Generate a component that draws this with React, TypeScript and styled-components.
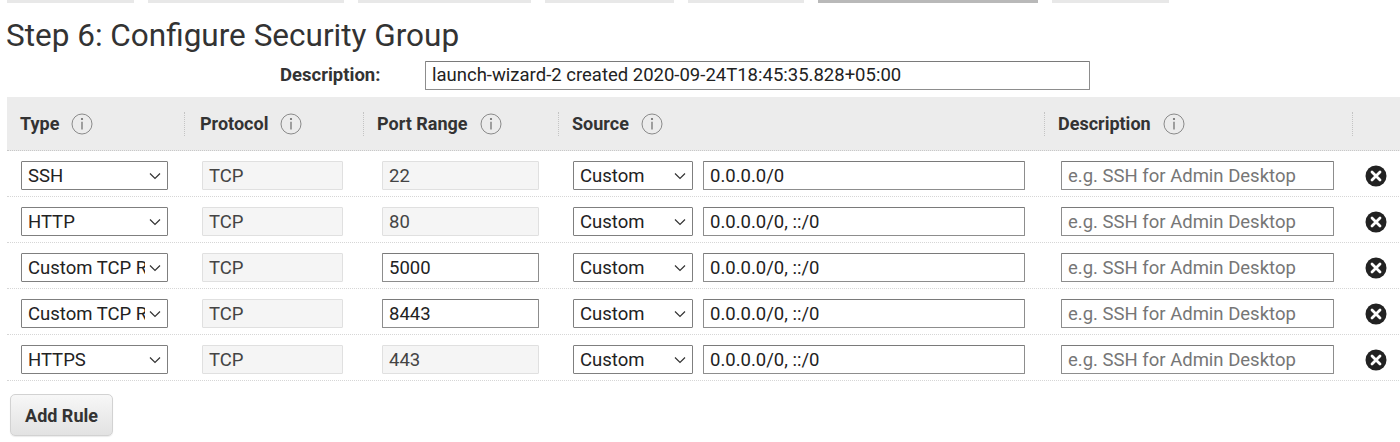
import React from "react";
import styled, { createGlobalStyle } from "styled-components";

const GlobalStyle = createGlobalStyle`
  html, body { margin: 0; padding: 0; background: #ffffff; }
  body { font-family: Roboto, "Liberation Sans", sans-serif; color: #222; overflow: hidden; width: 1400px; height: 442px; }
  * { box-sizing: border-box; }
`;

const Page = styled.div`
  width: 1400px;
  height: 442px;
  overflow: hidden;
`;

const TabStrip = styled.div`
  display: flex;
  gap: 14px;
  padding-left: 7px;
  height: 3px;
`;

const Tab = styled.div<{ $w: number; $active?: boolean }>`
  width: ${(p) => p.$w}px;
  height: 3px;
  background: ${(p) => (p.$active ? "#b9b9b9" : "#e8e8e8")};
`;

const Title = styled.h1`
  margin: 15px 0 0 0;
  padding-left: 6px;
  font-family: Roboto, "Liberation Sans", sans-serif;
  font-weight: 400;
  font-size: 31.5px;
  line-height: 36px;
  color: #333;
  letter-spacing: 0;
`;

const DescRow = styled.div`
  display: flex;
  align-items: center;
  margin-top: 7px;
  padding-left: 280px;
  height: 28px;
`;

const DescLabel = styled.label`
  font-weight: 700;
  font-size: 18.5px;
  color: #333;
  width: 145px;
`;

const TextBox = styled.div<{ $w: number; $disabled?: boolean; $placeholder?: boolean }>`
  width: ${(p) => p.$w}px;
  height: 29px;
  display: flex;
  align-items: center;
  padding-left: 6px;
  font-size: 18.5px;
  white-space: nowrap;
  overflow: hidden;
  color: ${(p) => (p.$placeholder ? "#767676" : p.$disabled ? "#444" : "#222")};
  background: ${(p) => (p.$disabled ? "#f5f5f5" : "#ffffff")};
  border: 1px ${(p) => (p.$disabled ? "solid #e0e0e0" : "solid #8d8d8d")};
  border-top-color: ${(p) => (p.$disabled ? "#e0e0e0" : "#7a7a7a")};
  border-radius: 1px;
`;

const Table = styled.div`
  margin-top: 8px;
  margin-left: 7px;
  width: 1420px;
`;

const COLS = "177px 179px 195px 486px 308px 1fr";

const HeaderRow = styled.div`
  display: grid;
  grid-template-columns: ${COLS};
  height: 54px;
  background: #ececec;
  border-bottom: 1px dotted #c8c8c8;
`;

const HeaderCell = styled.div<{ $pad: number; $first?: boolean }>`
  display: flex;
  align-items: center;
  gap: 12px;
  padding-left: ${(p) => p.$pad}px;
  position: relative;
  font-weight: 700;
  font-size: 18px;
  color: #333;
  &::before {
    content: "";
    display: ${(p) => (p.$first ? "none" : "block")};
    position: absolute;
    left: 0;
    top: 15px;
    height: 24px;
    border-left: 1px dotted #c4c4c4;
  }
`;

const BodyRow = styled.div`
  display: grid;
  grid-template-columns: ${COLS};
  height: 46px;
  padding-top: 10px;
  border-bottom: 1px dotted #d6d6d6;
`;

const Cell = styled.div<{ $pad: number }>`
  display: flex;
  align-items: flex-start;
  gap: 10px;
  padding-left: ${(p) => p.$pad}px;
`;

const SelectBox = styled.div<{ $w: number }>`
  width: ${(p) => p.$w}px;
  height: 29px;
  display: flex;
  align-items: center;
  padding: 0 6px;
  gap: 4px;
  font-size: 18.5px;
  color: #222;
  background: #fff;
  border: 1px solid #7f7f7f;
  border-radius: 1px;
`;

const SelectText = styled.span`
  flex: 1;
  overflow: hidden;
  white-space: nowrap;
`;

const RemoveCell = styled.div`
  display: flex;
  justify-content: flex-start;
  padding-left: 13px;
  padding-top: 4px;
`;

const AddButton = styled.button`
  margin: 13px 0 0 10px;
  width: 103px;
  height: 42px;
  font-family: Roboto, "Liberation Sans", sans-serif;
  font-weight: 700;
  font-size: 18px;
  color: #333;
  background: linear-gradient(#f7f7f7, #e2e2e2);
  border: 1px solid #d2d2d2;
  border-radius: 5px;
  box-shadow: 0 1px 1px rgba(0, 0, 0, 0.08);
  padding: 0;
`;

const InfoIcon = () => (
  <svg width="22" height="22" viewBox="0 0 22 22">
    <circle cx="11" cy="11" r="10" fill="none" stroke="#8a8a8a" strokeWidth="1" />
    <circle cx="11" cy="6" r="1.1" fill="#6a6a6a" />
    <path d="M11 8.8 V16.5" stroke="#6a6a6a" strokeWidth="1.2" />
  </svg>
);

const Chevron = () => (
  <svg width="12" height="8" viewBox="0 0 12 8">
    <polyline points="1,1.5 6,6.5 11,1.5" fill="none" stroke="#333" strokeWidth="1.2" />
  </svg>
);

const RemoveIcon = () => (
  <svg width="22" height="22" viewBox="0 0 22 22">
    <circle cx="11" cy="11" r="10.5" fill="#222" />
    <path d="M7 7 L15 15 M15 7 L7 15" stroke="#fff" strokeWidth="2.8" strokeLinecap="round" />
  </svg>
);

type Rule = { type: string; port: string; portDisabled: boolean; cidr: string };

const rules: Rule[] = [
  { type: "SSH", port: "22", portDisabled: true, cidr: "0.0.0.0/0" },
  { type: "HTTP", port: "80", portDisabled: true, cidr: "0.0.0.0/0, ::/0" },
  { type: "Custom TCP Rule", port: "5000", portDisabled: false, cidr: "0.0.0.0/0, ::/0" },
  { type: "Custom TCP Rule", port: "8443", portDisabled: false, cidr: "0.0.0.0/0, ::/0" },
  { type: "HTTPS", port: "443", portDisabled: true, cidr: "0.0.0.0/0, ::/0" },
];

const tabs = [127, 196, 173, 129, 116, 220, 117];

export default function App() {
  return (
    <Page>
      <GlobalStyle />
      <TabStrip>
        {tabs.map((w, i) => (
          <Tab key={i} $w={w} $active={i === 5} />
        ))}
      </TabStrip>
      <Title>Step 6: Configure Security Group</Title>
      <DescRow>
        <DescLabel>Description:</DescLabel>
        <TextBox $w={665}>launch-wizard-2 created 2020-09-24T18:45:35.828+05:00</TextBox>
      </DescRow>
      <Table>
        <HeaderRow>
          <HeaderCell $first $pad={13}>
            Type <InfoIcon />
          </HeaderCell>
          <HeaderCell $pad={16}>
            Protocol <InfoIcon />
          </HeaderCell>
          <HeaderCell $pad={14}>
            Port Range <InfoIcon />
          </HeaderCell>
          <HeaderCell $pad={14}>
            Source <InfoIcon />
          </HeaderCell>
          <HeaderCell $pad={14}>
            Description <InfoIcon />
          </HeaderCell>
          <HeaderCell $pad={14} />
        </HeaderRow>
        {rules.map((r, i) => (
          <BodyRow key={i}>
            <Cell $pad={14}>
              <SelectBox $w={147}>
                <SelectText>{r.type}</SelectText>
                <Chevron />
              </SelectBox>
            </Cell>
            <Cell $pad={18}>
              <TextBox $w={141} $disabled>
                TCP
              </TextBox>
            </Cell>
            <Cell $pad={19}>
              <TextBox $w={157} $disabled={r.portDisabled}>
                {r.port}
              </TextBox>
            </Cell>
            <Cell $pad={15}>
              <SelectBox $w={120}>
                <SelectText>Custom</SelectText>
                <Chevron />
              </SelectBox>
              <TextBox $w={322}>{r.cidr}</TextBox>
            </Cell>
            <Cell $pad={17}>
              <TextBox $w={273} $placeholder>
                e.g. SSH for Admin Desktop
              </TextBox>
            </Cell>
            <RemoveCell>
              <RemoveIcon />
            </RemoveCell>
          </BodyRow>
        ))}
      </Table>
      <AddButton>Add Rule</AddButton>
    </Page>
  );
}
